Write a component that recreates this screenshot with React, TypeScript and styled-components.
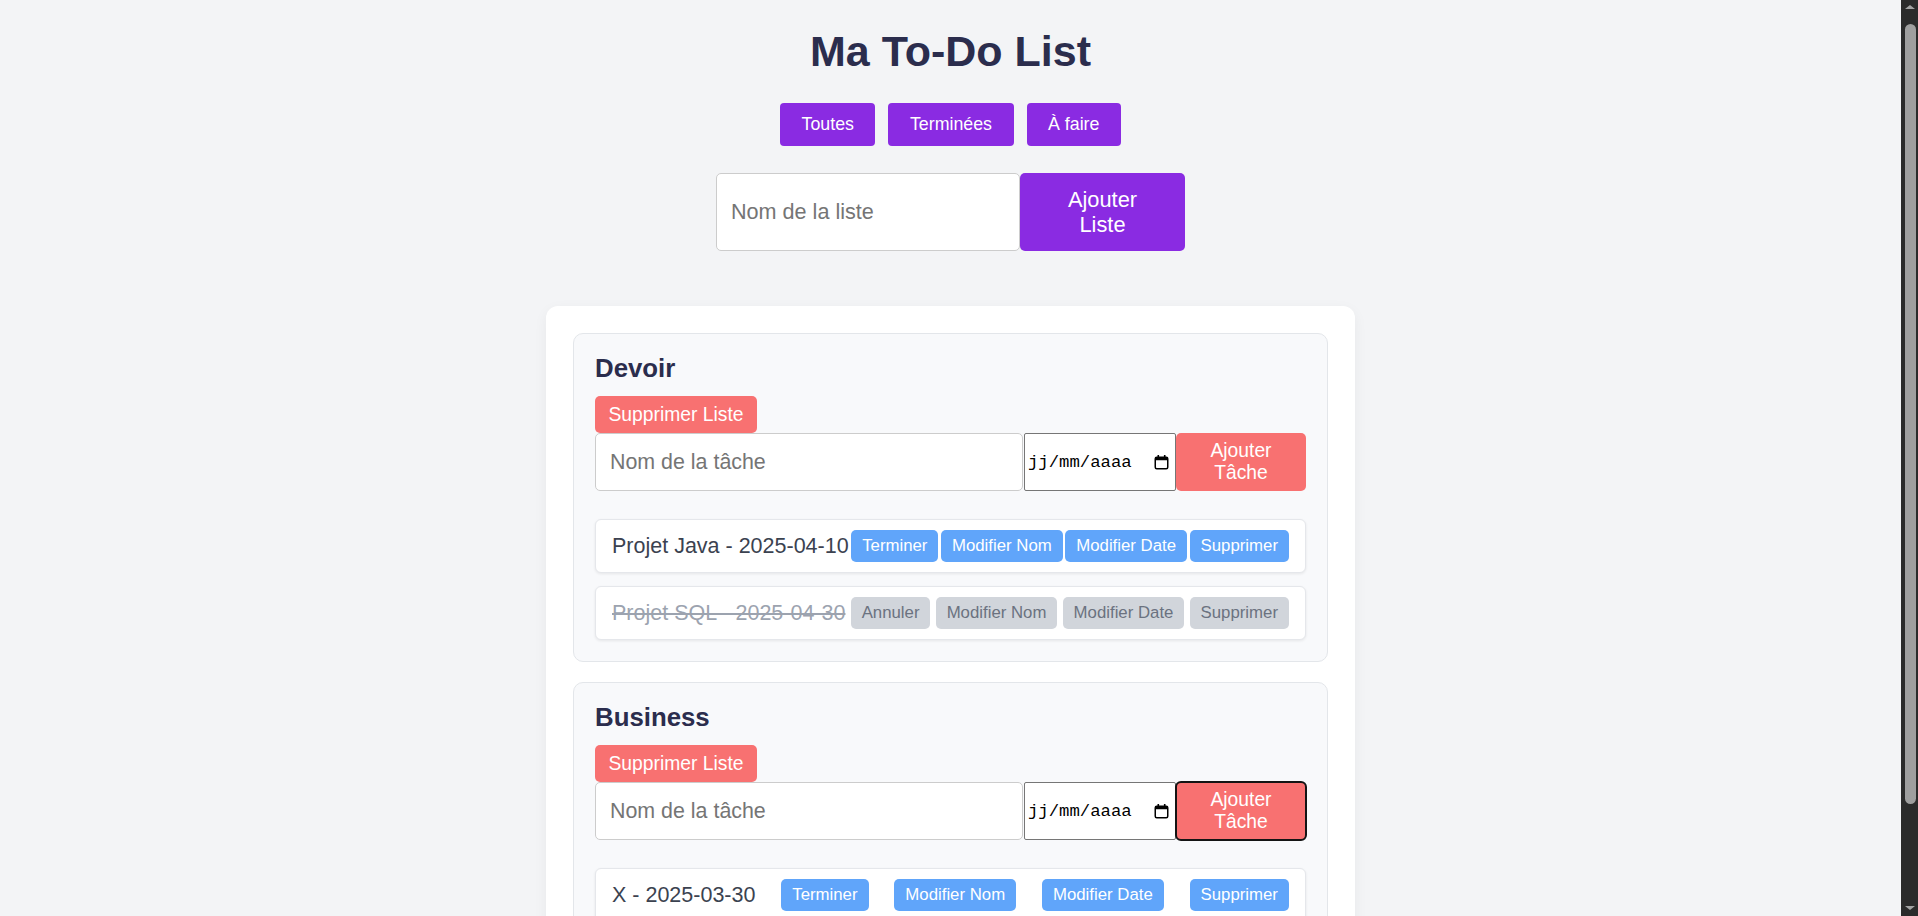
import React from "react";
import styled, { createGlobalStyle, css } from "styled-components";

const GlobalStyle = createGlobalStyle`
  html {
    overflow: hidden;
  }
  html, body {
    margin: 0;
    padding: 0;
    background: #f3f4f6;
    font-family: "Liberation Sans", Arial, sans-serif;
  }
`;

const Page = styled.div`
  display: flex;
  flex-direction: column;
  align-items: center;
  padding: 27px 17px 64px 0;
`;

const ScrollBar = styled.div`
  position: fixed;
  top: 0;
  right: 0;
  width: 17px;
  height: 100vh;
  display: flex;
  flex-direction: column;
  align-items: center;
  background: #2b2b2b;
`;

const ScrollArrow = styled.div<{ $down?: boolean }>`
  width: 0;
  height: 0;
  margin: ${(p) => (p.$down ? "auto 0 6px" : "5px 0 0")};
  border-left: 5px solid transparent;
  border-right: 5px solid transparent;
  ${(p) =>
    p.$down
      ? css`
          border-top: 4px solid #a3a3a3;
        `
      : css`
          border-bottom: 4px solid #a3a3a3;
        `}
`;

const ScrollThumb = styled.div`
  width: 11px;
  height: 780px;
  margin: 15px 0 0 2px;
  border-radius: 6px;
  background: #9f9f9f;
`;

const Title = styled.h1`
  margin: 0;
  font-size: 43px;
  font-weight: 700;
  line-height: 48px;
  color: #2b2d4d;
`;

const FilterBar = styled.div`
  display: flex;
  gap: 13px;
  margin-top: 28px;
`;

const FilterButton = styled.button`
  height: 43px;
  padding: 0 21.5px;
  border: none;
  border-radius: 4px;
  background: #8a2be2;
  color: #ffffff;
  font-family: inherit;
  font-size: 17.8px;
`;

const ListForm = styled.div`
  display: flex;
  margin-top: 27px;
`;

const ListInput = styled.input`
  box-sizing: border-box;
  width: 304px;
  height: 78px;
  padding: 0 14px;
  border: 1px solid #cccccc;
  border-radius: 5px;
  background: #ffffff;
  font-family: inherit;
  font-size: 21.6px;
  &::placeholder {
    color: #757575;
  }
`;

const ListAddButton = styled.button`
  box-sizing: border-box;
  width: 165px;
  height: 78px;
  padding: 0 30px;
  border: none;
  border-radius: 5px;
  background: #8a2be2;
  color: #ffffff;
  font-family: inherit;
  font-size: 21.8px;
  line-height: 25px;
`;

const Board = styled.div`
  box-sizing: border-box;
  width: 809px;
  margin-top: 55px;
  padding: 27px;
  display: flex;
  flex-direction: column;
  gap: 20px;
  background: #ffffff;
  border-radius: 12px;
  box-shadow: 0 4px 14px rgba(0, 0, 0, 0.05);
`;

const ListCard = styled.section`
  display: flex;
  flex-direction: column;
  padding: 19px 21px 21px;
  background: #f8f9fb;
  border: 1px solid #e3e6ea;
  border-radius: 10px;
`;

const ListTitle = styled.h2`
  margin: 0;
  font-size: 25.8px;
  font-weight: 700;
  line-height: 30px;
  color: #2b2d4d;
`;

const DeleteListButton = styled.button`
  align-self: flex-start;
  height: 37px;
  margin-top: 13px;
  padding: 0 13.5px;
  border: none;
  border-radius: 5px;
  background: #f87171;
  color: #ffffff;
  font-family: inherit;
  font-size: 19.3px;
`;

const TaskForm = styled.div`
  display: flex;
  height: 58px;
`;

const TaskInput = styled.input`
  box-sizing: border-box;
  flex: 1;
  min-width: 0;
  height: 100%;
  padding: 0 14px;
  border: 1px solid #cccccc;
  border-radius: 5px;
  background: #ffffff;
  font-family: inherit;
  font-size: 21.4px;
  &::placeholder {
    color: #757575;
  }
`;

const DateField = styled.div`
  box-sizing: border-box;
  width: 152px;
  height: 100%;
  display: flex;
  align-items: center;
  justify-content: space-between;
  padding: 0 6px 0 3px;
  margin-left: 1px;
  border: 1px solid #767676;
  border-radius: 2px;
  background: #ffffff;
  color: #000000;
  font-family: "Liberation Mono", "DejaVu Sans Mono", monospace;
  font-size: 17.3px;
`;

const AddTaskButton = styled.button<{ $focused?: boolean }>`
  box-sizing: border-box;
  width: 130px;
  height: 100%;
  padding: 0 20px;
  border: none;
  border-radius: 5px;
  background: #f87171;
  color: #ffffff;
  font-family: inherit;
  font-size: 19.3px;
  line-height: 22px;
  ${(p) =>
    p.$focused &&
    css`
      outline: 2px solid #141414;
      outline-offset: -1px;
    `}
`;

const TaskList = styled.div`
  display: flex;
  flex-direction: column;
  gap: 13px;
  margin-top: 28px;
`;

const TaskItem = styled.div`
  box-sizing: border-box;
  height: 54px;
  display: flex;
  align-items: center;
  justify-content: space-between;
  padding: 0 16px;
  background: #ffffff;
  border: 1px solid #e5e7eb;
  border-radius: 6px;
  box-shadow: 0 1px 3px rgba(0, 0, 0, 0.08);
`;

const TaskText = styled.span<{ $done?: boolean }>`
  white-space: nowrap;
  font-size: 21.5px;
  color: ${(p) => (p.$done ? "#9ca3af" : "#3b4250")};
  text-decoration: ${(p) => (p.$done ? "line-through" : "none")};
`;

const TaskButton = styled.button<{ $done?: boolean }>`
  flex-shrink: 0;
  height: 32px;
  padding: 0 11px;
  border: none;
  border-radius: 5px;
  white-space: nowrap;
  font-family: inherit;
  font-size: 16.8px;
  background: ${(p) => (p.$done ? "#d1d5db" : "#60a5fa")};
  color: ${(p) => (p.$done ? "#6b7280" : "#ffffff")};
`;

const CalendarIcon = () => (
  <svg width="15" height="16" viewBox="0 0 15 16" aria-hidden="true">
    <rect x="1.25" y="3.25" width="12.5" height="11.5" rx="1.5" fill="none" stroke="#000" strokeWidth="1.5" />
    <rect x="1.25" y="3.25" width="12.5" height="3" fill="#000" />
    <rect x="3.5" y="1" width="1.6" height="3" fill="#000" />
    <rect x="9.9" y="1" width="1.6" height="3" fill="#000" />
  </svg>
);

type Task = { label: string; done: boolean };
type TodoList = { name: string; tasks: Task[]; focused?: boolean };

const lists: TodoList[] = [
  {
    name: "Devoir",
    tasks: [
      { label: "Projet Java - 2025-04-10", done: false },
      { label: "Projet SQL - 2025-04-30", done: true },
    ],
  },
  {
    name: "Business",
    focused: true,
    tasks: [{ label: "X - 2025-03-30", done: false }],
  },
];

export default function App() {
  return (
    <>
      <GlobalStyle />
      <Page>
        <Title>Ma To-Do List</Title>
        <FilterBar>
          <FilterButton>Toutes</FilterButton>
          <FilterButton>Terminées</FilterButton>
          <FilterButton>À faire</FilterButton>
        </FilterBar>
        <ListForm>
          <ListInput placeholder="Nom de la liste" />
          <ListAddButton>Ajouter Liste</ListAddButton>
        </ListForm>
        <Board>
          {lists.map((list) => (
            <ListCard key={list.name}>
              <ListTitle>{list.name}</ListTitle>
              <DeleteListButton>Supprimer Liste</DeleteListButton>
              <TaskForm>
                <TaskInput placeholder="Nom de la tâche" />
                <DateField>
                  <span>jj/mm/aaaa</span>
                  <CalendarIcon />
                </DateField>
                <AddTaskButton $focused={list.focused}>Ajouter Tâche</AddTaskButton>
              </TaskForm>
              <TaskList>
                {list.tasks.map((t) => (
                  <TaskItem key={t.label}>
                    <TaskText $done={t.done}>{t.label}</TaskText>
                    <TaskButton $done={t.done}>{t.done ? "Annuler" : "Terminer"}</TaskButton>
                    <TaskButton $done={t.done}>Modifier Nom</TaskButton>
                    <TaskButton $done={t.done}>Modifier Date</TaskButton>
                    <TaskButton $done={t.done}>Supprimer</TaskButton>
                  </TaskItem>
                ))}
              </TaskList>
            </ListCard>
          ))}
        </Board>
      </Page>
      <ScrollBar aria-hidden="true">
        <ScrollArrow />
        <ScrollThumb />
        <ScrollArrow $down />
      </ScrollBar>
    </>
  );
}
